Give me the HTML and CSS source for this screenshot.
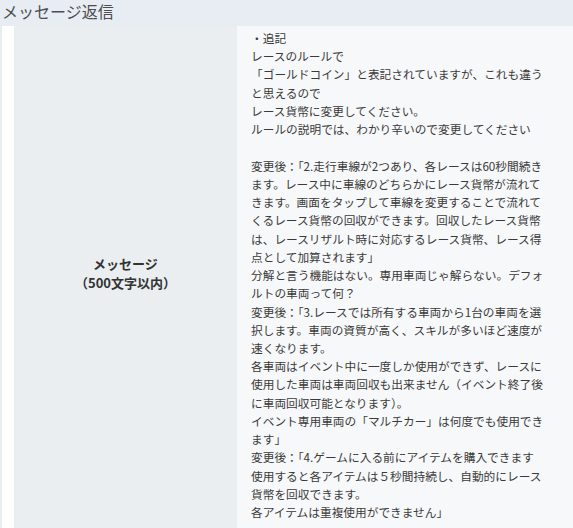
FILE: index.html
```html
<!DOCTYPE html>
<html lang="ja">
<head>
<meta charset="utf-8">
<link rel="stylesheet" href="styles.css">
</head>
<body>
<h1 class="title">メッセージ返信</h1>
<div class="table">
  <div class="spacer"></div>
  <div class="label">メッセージ<br>（500文字以内）</div>
  <div class="content">・追記<br>レースのルールで<br>「ゴールドコイン」と表記されていますが、これも違う<br>と思えるので<br>レース貨幣に変更してください。<br>ルールの説明では、わかり辛いので変更してください<br><br>変更後：「2.走行車線が2つあり、各レースは60秒間続き<br>ます。レース中に車線のどちらかにレース貨幣が流れて<br>きます。画面をタップして車線を変更することで流れて<br>くるレース貨幣の回収ができます。回収したレース貨幣<br>は、レースリザルト時に対応するレース貨幣、レース得<br>点として加算されます」<br>分解と言う機能はない。専用車両じゃ解らない。デフォ<br>ルトの車両って何？<br>変更後：「3.レースでは所有する車両から1台の車両を選<br>択します。車両の資質が高く、スキルが多いほど速度が<br>速くなります。<br>各車両はイベント中に一度しか使用ができず、レースに<br>使用した車両は車両回収も出来ません（イベント終了後<br>に車両回収可能となります）。<br>イベント専用車両の「マルチカー」は何度でも使用でき<br>ます」<br>変更後：「4.ゲームに入る前にアイテムを購入できます<br>使用すると各アイテムは５秒間持続し、自動的にレース<br>貨幣を回収できます。<br>各アイテムは重複使用ができません」</div>
</div>
</body>
</html>
```

FILE: styles.css
```css
html, body {
  margin: 0;
  padding: 0;
  background: #e8edf4;
  font-family: "Noto Sans CJK JP", "Noto Sans", sans-serif;
  color: #333;
}
.title {
  margin: 0;
  padding: 1px 0 0 2px;
  height: 25px;
  font-size: 16px;
  font-weight: normal;
  line-height: 20px;
  color: #4d4d4d;
}
.table {
  display: flex;
  margin-left: 2px;
  background: #fff;
}
.spacer {
  width: 12px;
  flex: none;
  background: #fff;
}
.label {
  width: 223px;
  flex: none;
  display: flex;
  align-items: center;
  justify-content: center;
  text-align: center;
  background: #ebeef0;
  font-size: 13px;
  font-weight: bold;
  line-height: 19px;
  padding-bottom: 14px;
  box-sizing: border-box;
}
.content {
  flex: 1;
  background: #f7f8f9;
  padding: 3px 8px 12px 14px;
  font-size: 11.7px;
  line-height: 18.23px;
  white-space: nowrap;
  color: #3a3a3a;
}
```
